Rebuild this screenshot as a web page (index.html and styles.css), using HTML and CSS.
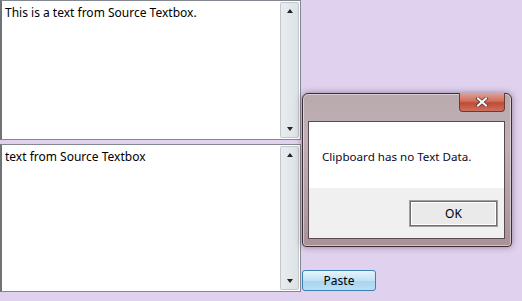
FILE: index.html
```html
<!DOCTYPE html>
<html lang="en">
<head>
	<meta charset="UTF-8">
	<title>Clipboard</title>
	<link rel="stylesheet" href="styles.css">
</head>
<body>
	<div class="window">
		<div class="boxes">
			<div class="textbox top">
				<div class="text">This is a text from Source Textbox.</div>
				<div class="scroll">
					<span class="arrow up"></span>
					<span class="arrow down"></span>
				</div>
			</div>
			<div class="textbox bottom">
				<div class="text">text from Source Textbox</div>
				<div class="scroll">
					<span class="arrow up"></span>
					<span class="arrow down"></span>
				</div>
			</div>
		</div>
		<div class="side">
			<button class="paste">Paste</button>
		</div>

		<div class="dialog">
			<div class="titlebar">
				<div class="close">
					<svg width="14" height="10" viewBox="0 0 14 10">
						<path d="M3 1.5 L11 8.5 M11 1.5 L3 8.5" stroke="#5a3a3a" stroke-width="3.6" stroke-linecap="square"/>
						<path d="M3 1.5 L11 8.5 M11 1.5 L3 8.5" stroke="#fff" stroke-width="2" stroke-linecap="square"/>
					</svg>
				</div>
			</div>
			<div class="dialog_body">
				<div class="message">Clipboard has no Text Data.</div>
				<div class="buttons">
					<button class="ok">OK</button>
				</div>
			</div>
		</div>
	</div>
</body>
</html>
```
FILE: styles.css
```css
body{
	margin:0;
	background:#e0d1ee;
	font-family:"Noto Sans","DejaVu Sans",sans-serif;
	font-size:12px;
	color:#000;
}
.window{
	position:relative;
	width:522px;
	height:301px;
	display:flex;
}
.boxes{
	width:301px;
	display:flex;
	flex-direction:column;
	gap:4px;
}
.textbox{
	display:flex;
	background:#fff;
	border:1px solid #828790;
	border-left:2px solid #6e7378;
	box-sizing:border-box;
}
.textbox.top{
	height:140px;
}
.textbox.bottom{
	height:148px;
}
.textbox .text{
	flex:1;
	padding:4px 3px;
	line-height:16px;
}
.scroll{
	width:17px;
	margin:1px 1px 1px 0;
	background:linear-gradient(to right,#e9edf0,#dde2e6);
	border:1px solid #c3c8cd;
	border-radius:2px;
	display:flex;
	flex-direction:column;
	justify-content:space-between;
	align-items:center;
	padding:6px 0;
}
.arrow{
	width:0;
	height:0;
	border-left:3px solid transparent;
	border-right:3px solid transparent;
}
.arrow.up{
	border-bottom:4px solid #222;
}
.arrow.down{
	border-top:4px solid #222;
}
.side{
	flex:1;
	display:flex;
	align-items:flex-end;
	padding:0 0 10px 1px;
}
.paste{
	width:74px;
	height:21px;
	font:inherit;
	font-size:12px;
	background:linear-gradient(to bottom,#e6f4fc,#bfe2f6 50%,#a7d5f1 51%,#b9dff4);
	border:1px solid #3c7fb1;
	border-radius:3px;
	padding:0;
}
.dialog{
	position:absolute;
	left:302px;
	top:93px;
	width:210px;
	height:154px;
	box-sizing:border-box;
	background:linear-gradient(to bottom,#b9aaae,#c0b0b5 30%,#a89298);
	border:1px solid #3c2c34;
	border-radius:6px 6px 4px 4px;
	box-shadow:0 0 6px rgba(60,40,60,.5), inset 0 0 0 1px rgba(255,255,255,.45);
	padding:0 6px 7px 5px;
	display:flex;
	flex-direction:column;
}
.titlebar{
	height:27px;
	display:flex;
	justify-content:flex-end;
	align-items:flex-start;
}
.close{
	width:46px;
	height:19px;
	margin-top:-1px;
	box-sizing:border-box;
	background:linear-gradient(to bottom,#e2a294,#cf6f5c 45%,#bf4a36 55%,#d07060);
	border:1px solid #6b3a36;
	border-top:none;
	border-radius:0 0 4px 4px;
	display:flex;
	justify-content:center;
	align-items:center;
}
.dialog_body{
	flex:1;
	border:1px solid #5a4a50;
	background:#f0f0f0;
	display:flex;
	flex-direction:column;
}
.message{
	height:66px;
	background:#fff;
	padding:27px 0 0 13px;
	box-sizing:border-box;
	font-size:11.6px;
	color:#0a0a1e;
}
.buttons{
	flex:1;
	display:flex;
	justify-content:flex-end;
	align-items:flex-start;
	padding:13px 7px 0 0;
}
.ok{
	width:87px;
	height:25px;
	font:inherit;
	background:#eaeaea;
	border:1px solid #707070;
	box-shadow:inset 0 0 0 1px #fff, 0 0 0 1px #a0a0a0;
	padding:0;
}
```
